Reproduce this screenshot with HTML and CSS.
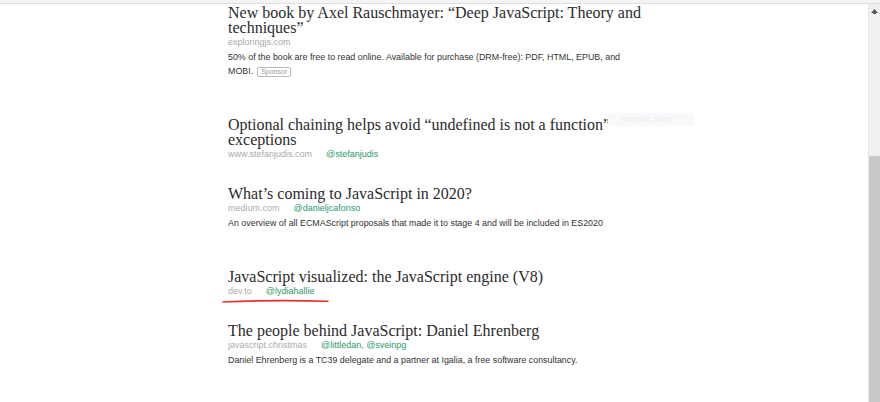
FILE: index.html
```html
<!DOCTYPE html>
<html>
<head>
<meta charset="utf-8">
<link rel="stylesheet" href="styles.css">
</head>
<body>
<div class="topbar"></div>
<div class="page">
  <main class="feed">
    <article class="item">
      <h2 class="title">New book by Axel Rauschmayer: “Deep JavaScript: Theory and techniques”</h2>
      <div class="meta"><span class="domain">exploringjs.com</span></div>
      <p class="desc">50% of the book are free to read online. Available for purchase (DRM-free): PDF, HTML, EPUB, and MOBI.<span class="badge">Sponsor</span></p>
    </article>
    <article class="item">
      <h2 class="title">Optional chaining helps avoid “undefined is not a function” exceptions</h2>
      <div class="meta"><span class="domain">www.stefanjudis.com</span><span class="handle">@stefanjudis</span></div>
      <div class="snip">Angular Snip</div>
    </article>
    <article class="item">
      <h2 class="title">What’s coming to JavaScript in 2020?</h2>
      <div class="meta"><span class="domain">medium.com</span><span class="handle">@danieljcafonso</span></div>
      <p class="desc">An overview of all ECMAScript proposals that made it to stage 4 and will be included in ES2020</p>
    </article>
    <article class="item">
      <h2 class="title">JavaScript visualized: the JavaScript engine (V8)</h2>
      <div class="meta"><span class="domain">dev.to</span><span class="handle">@lydiahallie</span></div>
      <svg class="scribble" width="110" height="6" viewBox="0 0 110 6"><path d="M1 4 C 30 2.6, 70 2.2, 106 3.2" fill="none" stroke="#e8322f" stroke-width="1.6" stroke-linecap="round"/></svg>
    </article>
    <article class="item">
      <h2 class="title">The people behind JavaScript: Daniel Ehrenberg</h2>
      <div class="meta"><span class="domain">javascript.christmas</span><span class="handle">@littledan</span>, <span class="handle">@sveinpg</span></div>
      <p class="desc">Daniel Ehrenberg is a TC39 delegate and a partner at Igalia, a free software consultancy.</p>
    </article>
  </main>
  <div class="scrollbar">
    <div class="arrow"><svg width="7" height="5" viewBox="0 0 7 5"><path d="M3.5 0 L7 4 L5 4 L5 5 L2 5 L2 4 L0 4 Z" fill="#555"/></svg></div>
    <div class="track"></div>
    <div class="thumb"></div>
  </div>
</div>
</body>
</html>
```
FILE: styles.css
```css
html, body {
  margin: 0;
  padding: 0;
  height: 100%;
  overflow: hidden;
  background: #fff;
}
body {
  display: flex;
  flex-direction: column;
}
.topbar {
  height: 3px;
  background: #f4f4f4;
  border-bottom: 1px solid #dedede;
  flex: none;
}
.page {
  flex: 1;
  display: flex;
  min-height: 0;
}
.feed {
  flex: 1;
  padding: 1px 0 0 228px;
  display: flex;
  flex-direction: column;
  gap: 25px;
}
.item {
  position: relative;
  width: 424px;
}
.title {
  margin: 0;
  font-family: "Liberation Serif", "DejaVu Serif", serif;
  font-weight: normal;
  font-size: 16px;
  line-height: 15px;
  color: #2b2b2b;
}
.meta {
  font-family: "Liberation Sans", Arial, sans-serif;
  font-size: 9px;
  line-height: 14px;
  color: #2a9a68;
}
.domain {
  color: #aaa;
  margin-right: 14px;
}
.handle {
  color: #2a9a68;
}
.desc {
  max-width: 405px;
  margin: 1px 0 14px;
  font-family: "Liberation Sans", Arial, sans-serif;
  font-size: 8.9px;
  line-height: 14px;
  color: #333;
}
.badge {
  display: inline-block;
  margin-left: 4px;
  font-size: 7px;
  line-height: 8px;
  padding: 0 3px;
  border: 1px solid #bbb;
  border-radius: 2px;
  color: #999;
  vertical-align: middle;
}
.snip {
  position: absolute;
  left: 380px;
  top: -4px;
  width: 74px;
  height: 13px;
  padding-left: 12px;
  background: #f8f9fb;
  border-radius: 2px;
  font-family: "Liberation Sans", Arial, sans-serif;
  font-size: 9px;
  line-height: 13px;
  color: #eceff3;
}
.scribble {
  position: absolute;
  left: -6px;
  top: 29px;
}
.scrollbar {
  width: 11px;
  flex: none;
  display: flex;
  flex-direction: column;
  background: #f0f0f0;
  border-left: 1px solid #e8e8e8;
}
.arrow {
  height: 15px;
  display: flex;
  align-items: center;
  justify-content: center;
}
.track {
  height: 137px;
}
.thumb {
  flex: 1;
  background: #c8c8c8;
}
```
